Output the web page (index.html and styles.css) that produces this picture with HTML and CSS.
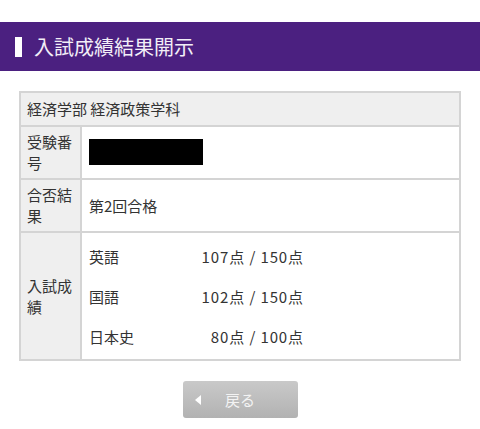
FILE: index.html
```html
<!DOCTYPE html>
<html lang="ja">
<head>
<meta charset="utf-8">
<title>入試成績結果開示</title>
<link rel="stylesheet" href="styles.css">
</head>
<body>
<div class="page">
  <h1 class="title"><span class="title-bar"></span>入試成績結果開示</h1>
  <div class="content">
    <table class="result">
      <tr>
        <td class="head" colspan="2">経済学部 経済政策学科</td>
      </tr>
      <tr>
        <th class="label">受験番号</th>
        <td class="data"><span class="redact"></span></td>
      </tr>
      <tr>
        <th class="label">合否結果</th>
        <td class="data">第2回合格</td>
      </tr>
      <tr>
        <th class="label">入試成績</th>
        <td class="data scores-cell">
          <div class="scores">
            <span class="subj">英語</span><span class="pt">107点 / 150点</span>
            <span class="subj">国語</span><span class="pt">102点 / 150点</span>
            <span class="subj">日本史</span><span class="pt">80点 / 100点</span>
          </div>
        </td>
      </tr>
    </table>
    <div class="actions">
      <a class="back" href="#"><span class="tri"></span><span class="back-text">戻る</span></a>
    </div>
  </div>
</div>
</body>
</html>
```
FILE: styles.css
```css
html, body {
  margin: 0;
  padding: 0;
  background: #fff;
}
body {
  font-family: "Noto Sans CJK JP", "Noto Sans", sans-serif;
  color: #333;
}
.page {
  padding-top: 22px;
}
.title {
  margin: 0;
  height: 49px;
  background: #4b2080;
  color: #f2eef7;
  font-size: 20px;
  font-weight: 400;
  display: flex;
  align-items: center;
  padding-left: 15px;
  line-height: 1;
}
.title-bar {
  display: inline-block;
  width: 7px;
  height: 20px;
  background: #fff;
  margin-right: 12px;
}
.content {
  padding: 20px 19px 0;
}
.result {
  width: 442px;
  border-collapse: collapse;
  border: 2px solid #d4d4d4;
  font-size: 15px;
}
.result td, .result th {
  border: 2px solid #d4d4d4;
  text-align: left;
  font-weight: 400;
  line-height: 21px;
  color: #333;
}
.result .head {
  background: #efefef;
  padding: 5px 6px 6px 6px;
  height: 20px;
}
.result .label {
  background: #efefef;
  width: 47px;
  padding: 4px 6px 5px;
  vertical-align: middle;
}
.result .data {
  background: #fff;
  padding: 4px 7px 5px;
  vertical-align: middle;
}
.redact {
  display: block;
  width: 114px;
  height: 26px;
  background: #000;
}
.result .scores-cell {
  padding: 3px 7px 3px;
}
.scores {
  display: grid;
  grid-template-columns: 82px 133px;
  grid-auto-rows: 40px;
  align-items: center;
}
.pt {
  text-align: right;
  letter-spacing: 0.9px;
}
.actions {
  display: flex;
  justify-content: center;
  padding-top: 20px;
}
.back {
  display: flex;
  align-items: center;
  width: 115px;
  height: 37px;
  box-sizing: border-box;
  border-radius: 3px;
  background: linear-gradient(#c9c9c9, #b2b2b2);
  text-decoration: none;
}
.tri {
  width: 0;
  height: 0;
  border-top: 5px solid transparent;
  border-bottom: 5px solid transparent;
  border-right: 6px solid #fff;
  margin-left: 12px;
}
.back-text {
  flex: 1;
  text-align: center;
  color: #f3f3f3;
  font-size: 15px;
  padding-right: 18px;
}
```
